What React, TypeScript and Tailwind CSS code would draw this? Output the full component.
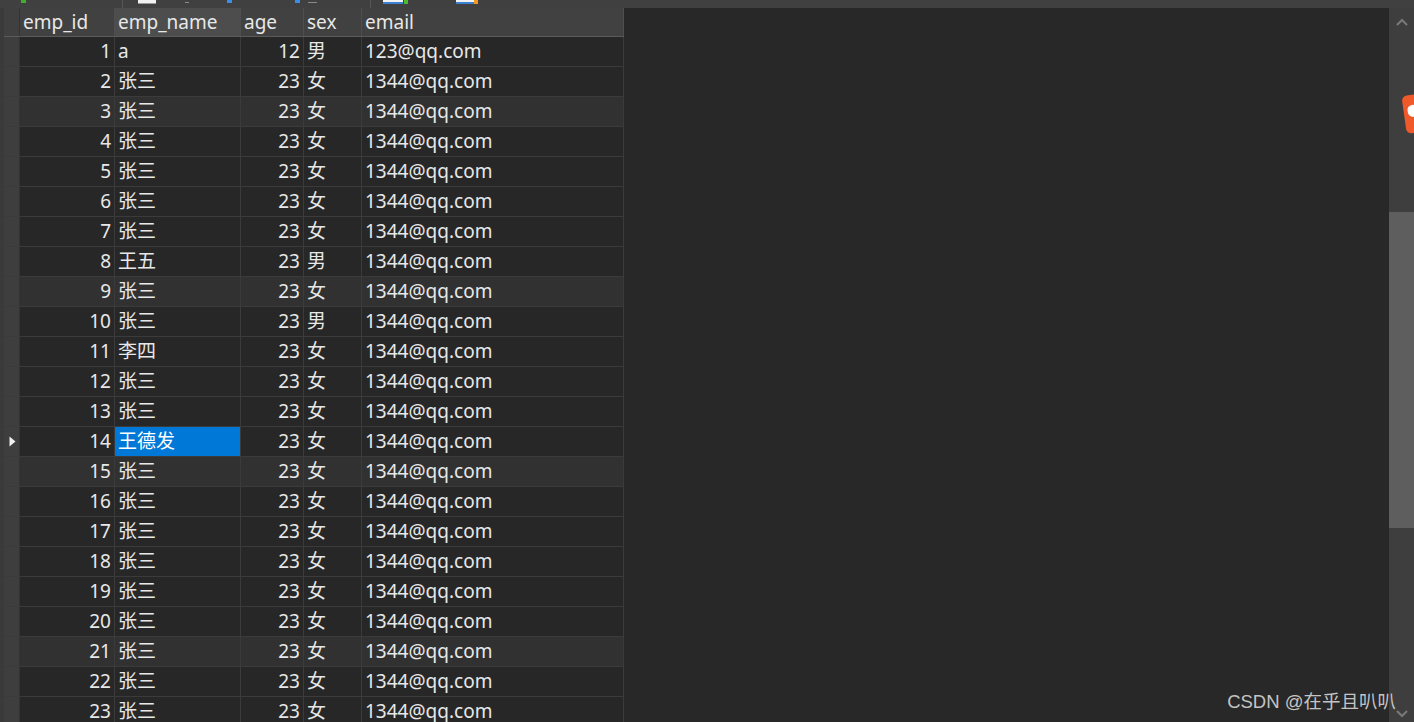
import React from "react";

type Row = [number, string, number, string, string];

const rows: Row[] = [
  [1, "a", 12, "男", "123@qq.com"],
  [2, "张三", 23, "女", "1344@qq.com"],
  [3, "张三", 23, "女", "1344@qq.com"],
  [4, "张三", 23, "女", "1344@qq.com"],
  [5, "张三", 23, "女", "1344@qq.com"],
  [6, "张三", 23, "女", "1344@qq.com"],
  [7, "张三", 23, "女", "1344@qq.com"],
  [8, "王五", 23, "男", "1344@qq.com"],
  [9, "张三", 23, "女", "1344@qq.com"],
  [10, "张三", 23, "男", "1344@qq.com"],
  [11, "李四", 23, "女", "1344@qq.com"],
  [12, "张三", 23, "女", "1344@qq.com"],
  [13, "张三", 23, "女", "1344@qq.com"],
  [14, "王德发", 23, "女", "1344@qq.com"],
  [15, "张三", 23, "女", "1344@qq.com"],
  [16, "张三", 23, "女", "1344@qq.com"],
  [17, "张三", 23, "女", "1344@qq.com"],
  [18, "张三", 23, "女", "1344@qq.com"],
  [19, "张三", 23, "女", "1344@qq.com"],
  [20, "张三", 23, "女", "1344@qq.com"],
  [21, "张三", 23, "女", "1344@qq.com"],
  [22, "张三", 23, "女", "1344@qq.com"],
  [23, "张三", 23, "女", "1344@qq.com"],
];

const SELECTED = 14;
const lighter = [3, 9, 15, 21];

function Toolbar() {
  // only the bottom edge of the toolbar icons is visible
  return (
    <div className="h-[8px] bg-[#404040] flex items-start shrink-0">
      <div className="ml-[21px] w-[5px] h-[3px] bg-[#3fae2a]" />
      <div className="ml-[96px] w-px h-[8px] bg-[#555555]" />
      <div className="ml-[15px] w-[18px] h-[4px] bg-[#f2f2f2] border-b border-[#9a9a9a]" />
      <div className="ml-[29px] mt-[2px] w-[4px] h-px bg-[#8a8a8a]" />
      <div className="ml-[38px] w-[5px] h-[3px] bg-[#3a8ee6]" />
      <div className="ml-[63px] w-[5px] h-[3px] bg-[#3a8ee6]" />
      <div className="ml-[8px] mt-[2px] w-[9px] h-px bg-[#8a8a8a]" />
      <div className="ml-[53px] w-px h-[8px] bg-[#555555]" />
      <div className="ml-[12px] w-[20px] h-[4px] bg-[#f2f2f2] border-b-2 border-[#3a7fd0]" />
      <div className="ml-px w-[4px] h-[4px] bg-[#4cbb2c]" />
      <div className="ml-[48px] w-[18px] h-[4px] bg-[#f2f2f2] border-b-2 border-[#3a7fd0]" />
      <div className="w-[4px] h-[4px] bg-[#f39a1e]" />
    </div>
  );
}

function Grid() {
  const cell = "h-full border-r border-[#3b3b3b] flex items-center";
  return (
    <div className="flex-1 flex min-w-0 overflow-hidden bg-[#282828]">
      <div className="w-[4px] bg-[#3a3a3a] shrink-0" />
      <div className="w-[620px] shrink-0 flex flex-col">
        {/* header */}
        <div className="h-[29px] flex border-b border-[#5a5a5a] bg-[#414141] shrink-0">
          <div className="w-[16px] h-full bg-[#404040] border-r border-[#333333]" />
          <div className="w-[95px] h-full border-r border-[#4e4e4e] flex items-center px-[3px]">emp_id</div>
          <div className="w-[126px] h-full border-r border-[#4e4e4e] bg-[#4d4d4d] flex items-center px-[3px]">emp_name</div>
          <div className="w-[63px] h-full border-r border-[#4e4e4e] flex items-center px-[3px]">age</div>
          <div className="w-[58px] h-full border-r border-[#4e4e4e] flex items-center px-[3px]">sex</div>
          <div className="w-[262px] h-full border-r border-[#4e4e4e] flex items-center px-[3px]">email</div>
        </div>
        {/* body */}
        {rows.map(([id, name, age, sex, email]) => {
          const sel = id === SELECTED;
          const bg = lighter.includes(id) ? "bg-[#313131]" : "bg-[#272727]";
          return (
            <div key={id} className={`h-[30px] flex shrink-0 border-b border-[#3b3b3b] ${bg}`}>
              <div className="w-[16px] h-full bg-[#3e3e3e] border-r border-[#333333] flex items-center justify-center pl-[2px]">
                {sel && (
                  <svg width="7" height="11" viewBox="0 0 7 11">
                    <path d="M0.5 0.5 L6.5 5.5 L0.5 10.5 Z" fill="#f0f0f0" />
                  </svg>
                )}
              </div>
              <div className={`w-[95px] ${cell} justify-end pr-[3px]`}>{id}</div>
              <div className={`w-[126px] ${cell} px-[3px] ${sel ? "bg-[#0078d7] text-white" : ""}`}>{name}</div>
              <div className={`w-[63px] ${cell} justify-end pr-[3px]`}>{age}</div>
              <div className={`w-[58px] ${cell} px-[3px]`}>{sex}</div>
              <div className={`w-[262px] ${cell} px-[3px]`}>{email}</div>
            </div>
          );
        })}
      </div>
    </div>
  );
}

function Scrollbar() {
  return (
    <div className="w-[25px] shrink-0 bg-[#3e3e3e] flex flex-col">
      <div className="h-[26px] flex items-center justify-center pt-[2px]">
        <svg width="12" height="8" viewBox="0 0 12 8">
          <path d="M1 7 L6 2 L11 7" fill="none" stroke="#7a7a7a" strokeWidth="2" />
        </svg>
      </div>
      <div className="h-[178px]" />
      <div className="h-[316px] bg-[#5e5e5e]" />
      <div className="flex-1" />
      <div className="h-[12px] flex items-start justify-center">
        <svg width="12" height="8" viewBox="0 0 12 8">
          <path d="M1 1 L6 6 L11 1" fill="none" stroke="#7a7a7a" strokeWidth="2" />
        </svg>
      </div>
    </div>
  );
}

export default function App() {
  return (
    <div
      className="relative w-[1414px] h-[722px] overflow-hidden bg-[#282828] flex flex-col text-[19px] leading-none text-[#e8e8e8]"
      style={{ fontFamily: '"Noto Sans", "Noto Sans CJK SC", sans-serif' }}
    >
      <Toolbar />
      <div className="flex flex-1 min-h-0">
        <Grid />
        <Scrollbar />
      </div>

      {/* floating orange badge, cut off by the window edge */}
      <div className="absolute left-[1404px] top-[94px] w-[30px] h-[38px] rounded-[5px] bg-[#f0592a] -rotate-[8deg]">
        <div className="absolute left-[4px] top-[10px] w-[10px] h-[12px] rounded-full bg-white" />
      </div>

      {/* watermark */}
      <div
        className="absolute right-[18px] bottom-[11px] text-[18.5px] text-[#c4c4c4]"
        style={{ fontFamily: '"Liberation Sans", "Noto Sans CJK SC", sans-serif' }}
      >
        CSDN @在乎且叭叭
      </div>
    </div>
  );
}
